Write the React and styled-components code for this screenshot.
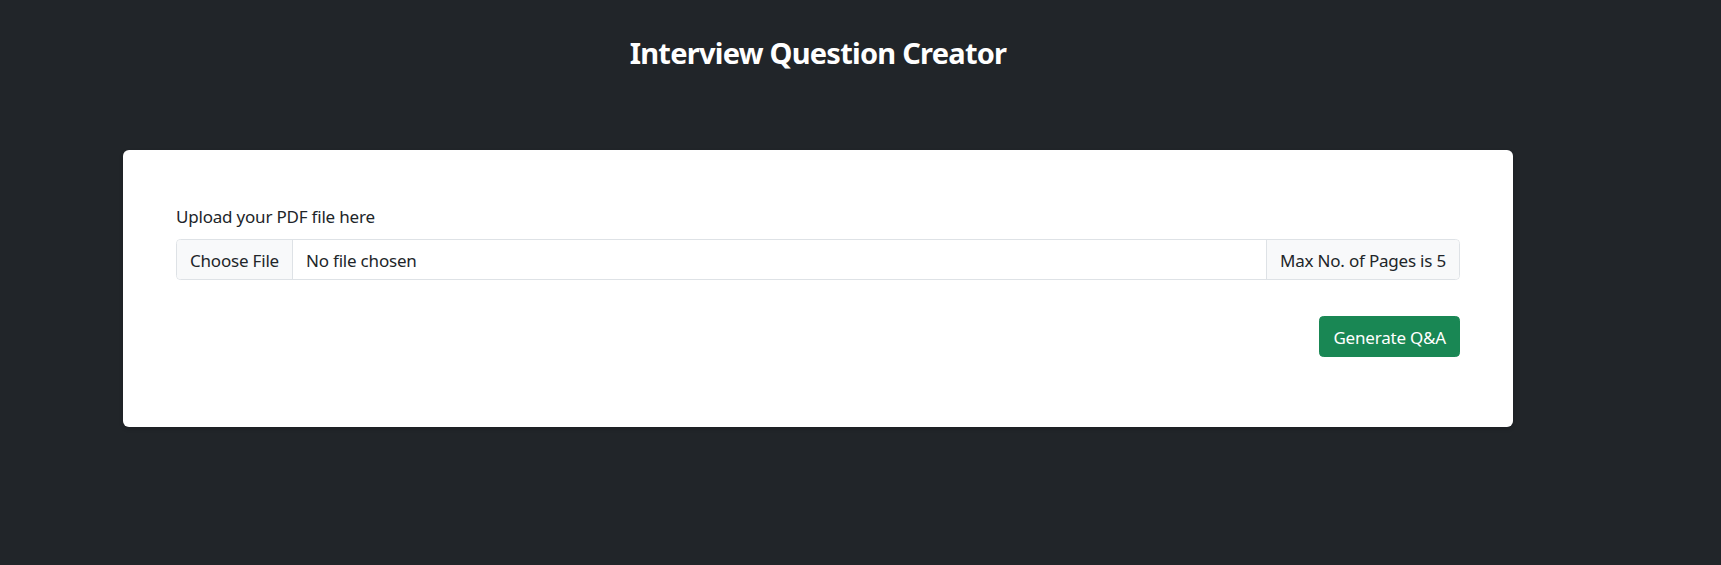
import React from "react";
import styled, { createGlobalStyle } from "styled-components";

const Global = createGlobalStyle`
  html, body {
    margin: 0;
    padding: 0;
    background: #212529;
  }
  body {
    font-family: "Noto Sans", "Open Sans", sans-serif;
    font-size: 17px;
    letter-spacing: -0.2px;
    line-height: 1.5;
    color: #dee2e6;
  }
`;

const Page = styled.div`
  width: 1390px;
  padding-left: 123px;
  padding-top: 35px;
  padding-bottom: 138px;
`;

const Title = styled.h3`
  margin: 0 0 79px;
  text-align: center;
  font-size: 29px;
  letter-spacing: -0.75px;
  line-height: 1.25;
  font-weight: 700;
  color: #ffffff;
`;

const Card = styled.div`
  background: #ffffff;
  border-radius: 6px;
  padding: 54px 53px 70px 53px;
  box-shadow: 0 2px 4px rgba(0, 0, 0, 0.15);
  color: #212529;
`;

const Label = styled.label`
  display: block;
  line-height: 26px;
  margin-bottom: 9px;
  color: #212529;
`;

const InputGroup = styled.div`
  display: flex;
  align-items: stretch;
  height: 41px;
  box-sizing: border-box;
  border: 1px solid #dee2e6;
  border-radius: 4.4px;
  overflow: hidden;
`;

const Segment = styled.span`
  display: flex;
  align-items: center;
  padding: 1px 13px 0;
  white-space: nowrap;
  color: #212529;
  background: ${(p) => (p.$muted ? "#f8f9fa" : "#ffffff")};
  border-left: ${(p) => (p.$divider ? "1px solid #dee2e6" : "none")};
  border-right: ${(p) => (p.$rightDivider ? "1px solid #dee2e6" : "none")};
  flex: ${(p) => (p.$grow ? "1 1 auto" : "0 0 auto")};
`;

const Actions = styled.div`
  display: flex;
  justify-content: flex-end;
  margin-top: 36px;
`;

const Button = styled.button`
  font: inherit;
  letter-spacing: inherit;
  height: 41px;
  padding: 1px 13px 0;
  border: 1px solid #198754;
  border-radius: 4.4px;
  background: #198754;
  color: #ffffff;
  cursor: pointer;
`;

export default function App() {
  return (
    <>
      <Global />
      <Page>
        <Title>Interview Question Creator</Title>
        <Card>
          <Label htmlFor="pdf">Upload your PDF file here</Label>
          <InputGroup>
            <Segment $muted $rightDivider>Choose File</Segment>
            <Segment $grow>No file chosen</Segment>
            <Segment $muted $divider>Max No. of Pages is 5</Segment>
          </InputGroup>
          <Actions>
            <Button type="button">Generate Q&amp;A</Button>
          </Actions>
        </Card>
      </Page>
    </>
  );
}
